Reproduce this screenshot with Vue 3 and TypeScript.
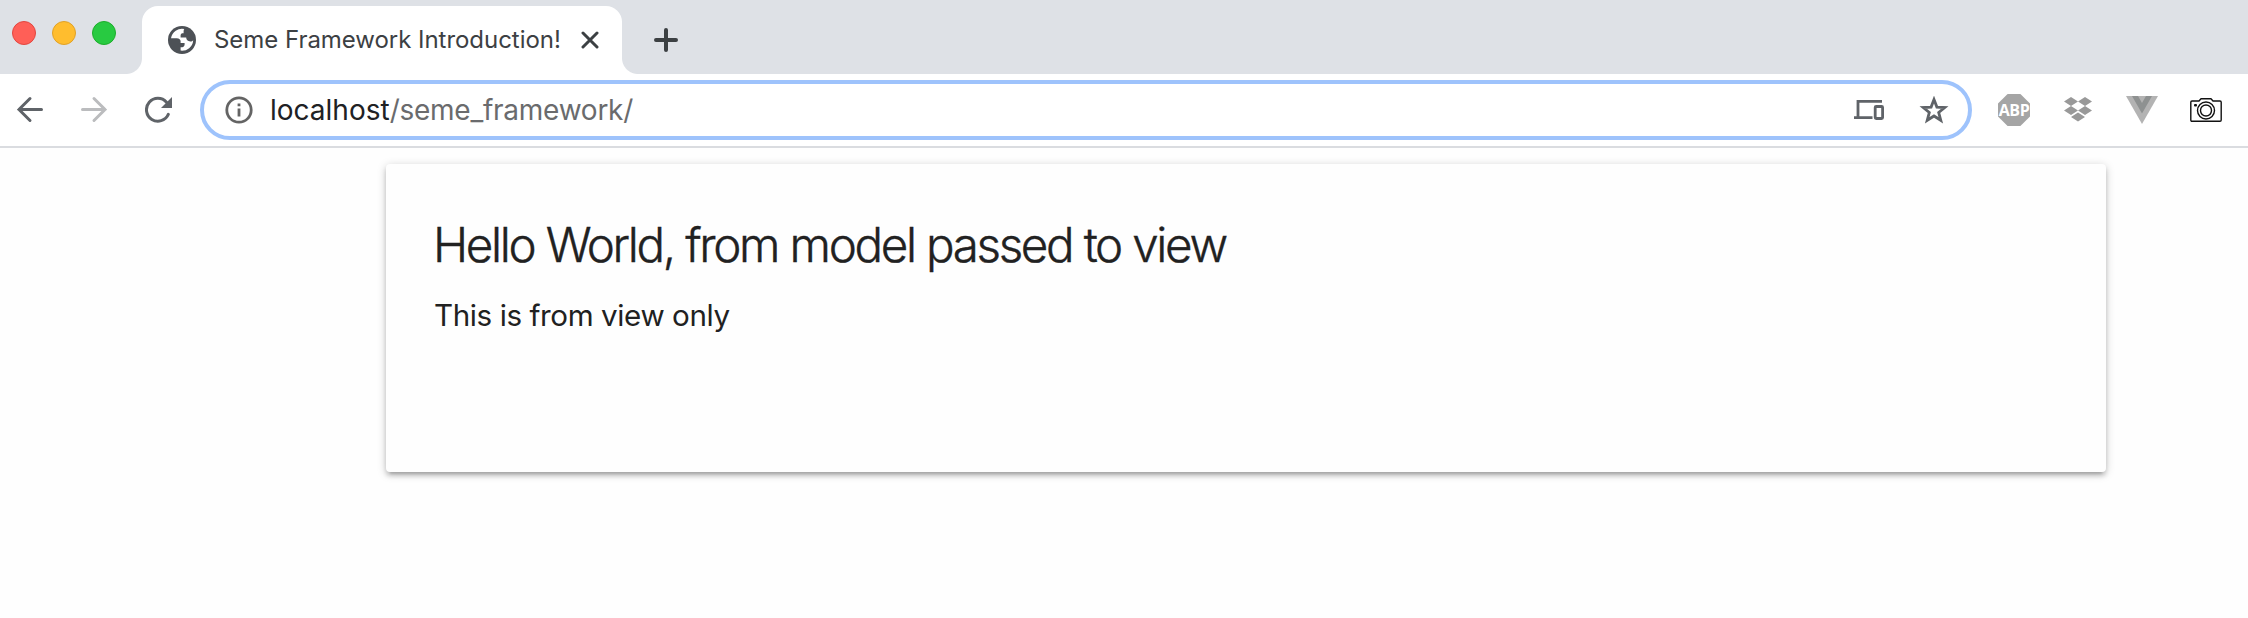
<script setup lang="ts">
const lights: string[] = ['red', 'amber', 'green']
</script>

<template>
  <div class="window">
    <header class="tabbar">
      <div class="lights"><i v-for="l in lights" :key="l" :class="['light', l]"></i></div>
      <div class="tab">
        <svg class="globe" width="28" height="28" viewBox="0 0 28 28">
          <circle cx="14" cy="14" r="14" fill="#4d5156" />
          <path fill="#fff" d="M16.3 3.1A11.2 11.2 0 0 0 3 12.2H8.8C11.2 12.2 12.6 13.6 12.6 15.2V17H16.6V18.6C16.6 20 15.6 21.2 14.2 21.2H12.6V24.6A11.2 11.2 0 0 0 25.2 14.2C24.6 15.2 23.6 15.4 22.4 15.4C19.6 15.4 18.2 14 18.2 11.6H12.6V9.4C12.6 7.8 13.6 7.2 15 7.2H15.6V5.2C15.6 4.2 15.9 3.6 16.3 3.1Z" />
        </svg>
        <span class="title">Seme Framework Introduction!</span>
        <svg class="close" width="18" height="18" viewBox="0 0 18 18"><path d="M2 2L16 16M16 2L2 16" fill="none" stroke="#3c4043" stroke-width="3" stroke-linecap="round" /></svg>
      </div>
      <svg class="plus" width="24" height="24" viewBox="0 0 24 24"><path d="M12 2V22M2 12H22" fill="none" stroke="#3c4043" stroke-width="4" stroke-linecap="round" /></svg>
    </header>
    <nav class="toolbar">
      <svg class="back" width="28" height="28" viewBox="0 0 28 28"><path d="M25.5 13.5H3M14 2.5L3 13.5L14 24.5" /></svg>
      <svg class="forward" width="28" height="28" viewBox="0 0 28 28"><path d="M2.5 13.5H25M14 2.5L25 13.5L14 24.5" /></svg>
      <svg class="reload" width="28" height="28" viewBox="0 0 28 28"><path d="M23.3 18.4A11.4 11.4 0 1 1 21.5 6.3" fill="none" stroke="#5f6368" stroke-width="3" stroke-linecap="round" /><path d="M27 1V12H16Z" fill="#5f6368" /></svg>
      <div class="omnibox">
        <svg class="info" width="28" height="28" viewBox="0 0 28 28"><circle cx="14" cy="14" r="12.2" fill="none" stroke="#646464" stroke-width="2.8" /><path d="M12.6 7.5h2.8v2.8h-2.8zM12.6 12.5h2.8v8h-2.8z" fill="#646464" /></svg>
        <span class="url"><b>localhost</b>/seme_framework/</span>
        <svg class="devices" width="30" height="20" viewBox="0 0 30 20"><path d="M28 1.3H4V17M0 17.7H18.5" fill="none" stroke="#5f6368" stroke-width="2.8" /><rect x="21.2" y="6.5" width="7.4" height="12" rx="1" fill="none" stroke="#5f6368" stroke-width="2.8" /></svg>
        <svg class="star" width="30" height="29" viewBox="0 0 30 29"><path d="M15 3.5L17.9 11.1L25.8 11.5L19.7 16.5L21.8 24.3L15 20L8.2 24.3L10.3 16.5L4.2 11.5L12.1 11.1Z" fill="none" stroke="#5f6368" stroke-width="2.8" /></svg>
      </div>
      <div class="abp">ABP</div>
      <svg class="dropbox" width="28" height="26" viewBox="0 0 28 26"><path fill="#999" d="M7 0L14 4.5L7 9L0 4.5ZM21 0L28 4.5L21 9L14 4.5ZM7 9L14 13.5L7 18L0 13.5ZM21 9L28 13.5L21 18L14 13.5ZM14 15.5L21 20L14 24.5L7 20Z" /></svg>
      <svg class="vue" width="32" height="28" viewBox="0 0 32 28"><path fill="#b3b3b3" d="M0 0H32L16 28Z" /><path fill="#8e9191" d="M6 0H12L16 7L20 0H26L16 17.5Z" /></svg>
      <svg class="camera" width="32" height="24" viewBox="0 0 32 24"><g fill="none" stroke="#111" stroke-width="1.4"><path d="M2 3H9L11 .8H21L23 3H30Q31.2 3 31.2 4.2V22Q31.2 23.2 30 23.2H2Q.8 23.2 .8 22V4.2Q.8 3 2 3Z" stroke-linejoin="round" /><circle cx="16" cy="12.5" r="8.5" /><circle cx="16" cy="12.5" r="5.5" /></g><rect x="4" y="6" width="3" height="2.4" rx="1" fill="#111" /></svg>
    </nav>
    <main class="page">
      <section class="card">
        <h1>Hello World, from model passed to view</h1>
        <p>This is from view only</p>
      </section>
    </main>
  </div>
</template>

<style scoped>
.window { height: 618px; display: flex; flex-direction: column; overflow: hidden; font-family: Inter, "Liberation Sans", sans-serif; background: #fefefe; }
.tabbar { height: 74px; flex: none; box-sizing: border-box; background: #dee1e6; display: flex; padding-top: 6px; }
.lights { width: 142px; box-sizing: border-box; padding: 15px 0 0 12px; display: flex; gap: 16px; }
.light { width: 24px; height: 24px; border-radius: 50%; box-sizing: border-box; border: 1px solid; }
.red { background: #ff5f57; border-color: #e2463f; }
.amber { background: #ffbd2e; border-color: #e0a127; }
.green { background: #28ca41; border-color: #1dad2b; }
.tab { position: relative; width: 480px; height: 68px; box-sizing: border-box; padding-left: 26px; background: #fff; border-radius: 16px 16px 0 0; display: flex; align-items: center; }
.tab::before, .tab::after { content: ""; position: absolute; bottom: 0; width: 16px; height: 16px; }
.tab::before { left: -16px; background: radial-gradient(circle at 0 0, transparent 15.5px, #fff 16.5px); }
.tab::after { right: -16px; background: radial-gradient(circle at 100% 0, transparent 15.5px, #fff 16.5px); }
.title { width: 348px; margin-left: 18px; padding-bottom: 2px; font-size: 24px; color: #3c4043; white-space: nowrap; letter-spacing: -.04px; }
.close { margin-left: 19px; }
.plus { margin: 22px 0 0 32px; }
.toolbar { height: 74px; flex: none; box-sizing: border-box; border-bottom: 2px solid #dadce0; background: #fff; display: flex; align-items: center; }
.toolbar svg { flex: none; }
.back, .forward { fill: none; stroke: #5f6368; stroke-width: 3; stroke-linecap: round; }
.forward { stroke: #bbbcbe; }
.back { margin-left: 16px; }
.forward { margin-left: 36px; }
.reload { margin-left: 37px; }
.omnibox { width: 1772px; height: 60px; flex: none; box-sizing: border-box; margin-left: 27px; border: 4px solid #9ec3fc; border-radius: 30px; display: flex; align-items: center; padding-left: 20.5px; }
.url { margin-left: 17.5px; font-size: 28px; color: #6a6b6d; white-space: nowrap; letter-spacing: -.25px; }
.url b { font-weight: 400; color: #202124; letter-spacing: 0; }
.devices { margin-left: auto; }
.star { margin: 0 19px 0 35px; }
.abp { width: 32px; height: 32px; margin-left: 26px; background: #a5a5a5; color: #fff; font: 700 16px/33px "Open Sans", sans-serif; letter-spacing: -.4px; text-align: center; clip-path: polygon(30% 0, 70% 0, 100% 30%, 100% 70%, 70% 100%, 30% 100%, 0 70%, 0 30%); }
.dropbox { margin-left: 34px; }
.vue { margin-left: 34px; }
.camera { margin-left: 32px; }
.page { padding: 16px 142px 0 386px; }
.card { height: 308px; box-sizing: border-box; padding: 47px 48px; border-radius: 4px; background: #fefefe; color: #212121; box-shadow: 0 4px 4px rgba(0,0,0,.14), 0 6px 2px -4px rgba(0,0,0,.12), 0 2px 10px rgba(0,0,0,.2); }
h1 { margin: 0 0 0 -1px; font-size: 47.5px; line-height: 68px; font-weight: 350; -webkit-text-stroke: .4px #212121; letter-spacing: -2.35px; word-spacing: .4px; white-space: nowrap; }
p { margin: 14px 0 0; font-size: 29.6px; line-height: 44px; letter-spacing: -.41px; white-space: nowrap; }
</style>

<style>
body { background: #fefefe; }
</style>
